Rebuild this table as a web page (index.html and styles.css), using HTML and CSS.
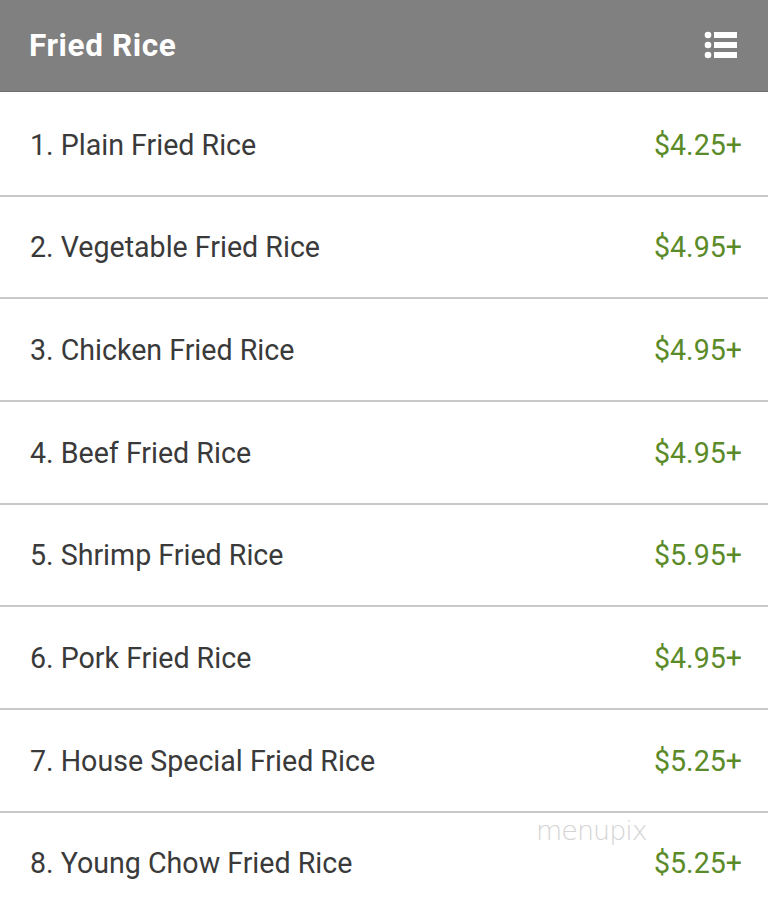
FILE: index.html
```html
<!DOCTYPE html>
<html>
<head>
<meta charset="utf-8">
<link rel="stylesheet" href="styles.css">
</head>
<body>
<header class="bar">
  <h1 class="title">Fried Rice</h1>
  <svg class="list-icon" width="34" height="30" viewBox="0 0 34 30">
    <circle cx="4" cy="5" r="3.3" fill="#fff"/>
    <circle cx="4" cy="15" r="3.3" fill="#fff"/>
    <circle cx="4" cy="25" r="3.3" fill="#fff"/>
    <rect x="10" y="2" width="23" height="6" fill="#fff"/>
    <rect x="10" y="12" width="23" height="6" fill="#fff"/>
    <rect x="10" y="22" width="23" height="6" fill="#fff"/>
  </svg>
</header>
<ul class="menu">
  <li class="item"><span class="name">1. Plain Fried Rice</span><span class="price">$4.25+</span></li>
  <li class="item"><span class="name">2. Vegetable Fried Rice</span><span class="price">$4.95+</span></li>
  <li class="item"><span class="name">3. Chicken Fried Rice</span><span class="price">$4.95+</span></li>
  <li class="item"><span class="name">4. Beef Fried Rice</span><span class="price">$4.95+</span></li>
  <li class="item"><span class="name">5. Shrimp Fried Rice</span><span class="price">$5.95+</span></li>
  <li class="item"><span class="name">6. Pork Fried Rice</span><span class="price">$4.95+</span></li>
  <li class="item"><span class="name">7. House Special Fried Rice</span><span class="price">$5.25+</span></li>
  <li class="item last"><span class="name">8. Young Chow Fried Rice</span><span class="price">$5.25+</span><span class="watermark">menupix</span></li>
</ul>
</body>
</html>
```

FILE: styles.css
```css
html, body {
  margin: 0;
  padding: 0;
  background: #ffffff;
  font-family: Roboto, "Liberation Sans", sans-serif;
}
.bar {
  height: 91px;
  background: #808080;
  border-bottom: 1px solid #6f6f6f;
  display: flex;
  align-items: center;
  justify-content: space-between;
  padding: 0 30px 0 29px;
}
.title {
  margin: 0;
  color: #ffffff;
  font-size: 31.5px;
  font-weight: 700;
  letter-spacing: 0.6px;
}
.list-icon {
  display: block;
  margin-bottom: 1px;
}
.menu {
  list-style: none;
  margin: 0;
  padding: 2px 0 0 0;
}
.item {
  position: relative;
  box-sizing: border-box;
  height: 102.67px;
  border-bottom: 2px solid #c9c9c9;
  display: flex;
  align-items: center;
  justify-content: space-between;
  padding: 1px 26px 0 30px;
}
.name {
  color: #3a3a3a;
  font-size: 28.6px;
}
.price {
  color: #5b8a28;
  font-size: 28.6px;
}
.watermark {
  position: absolute;
  left: 536px;
  top: 2px;
  color: #d4d4d4;
  font-size: 27px;
  font-weight: 300;
  font-family: "DejaVu Sans", sans-serif;
  letter-spacing: -1px;
}
```
